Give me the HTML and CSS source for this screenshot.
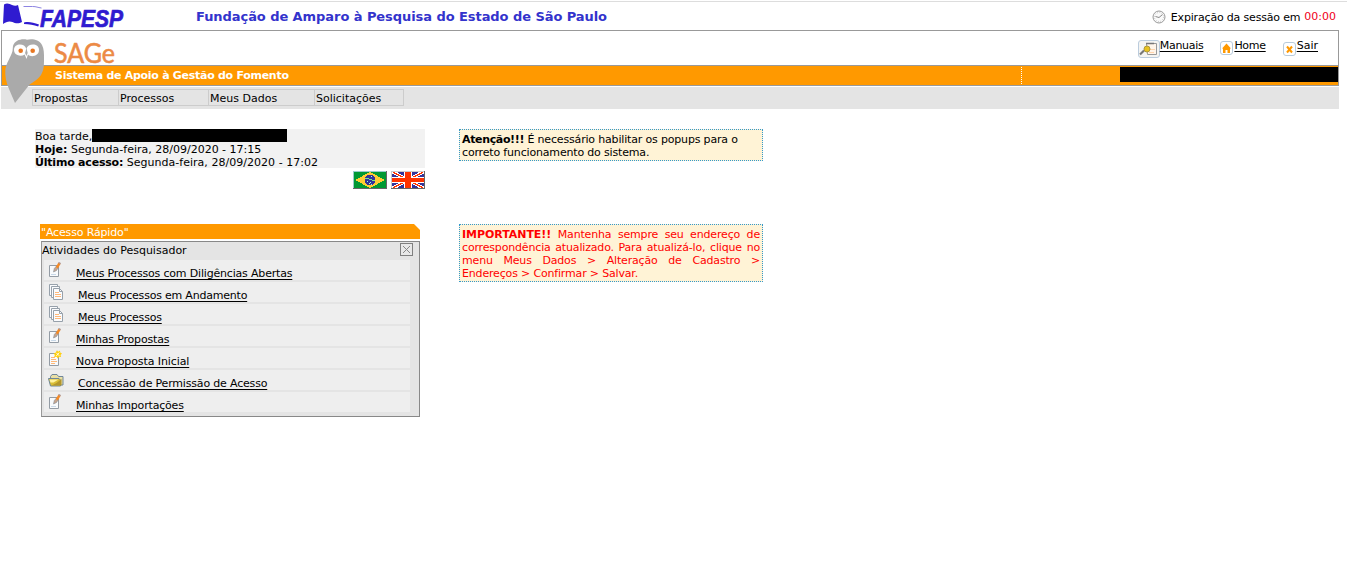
FILE: index.html
```html
<!DOCTYPE html>
<html lang="pt-BR">
<head>
<meta charset="utf-8">
<title>SAGe - FAPESP</title>
<link rel="stylesheet" href="styles.css">
</head>
<body>
<svg class="defs" width="0" height="0">
  <symbol id="edit" viewBox="0 0 17 17">
    <path d="M2.500 3.500h9v11h-9z" fill="#f8fafc" stroke="#949ca5"/>
    <path d="M4 12.500h5" stroke="#c8d8e8"/>
    <path d="M6.500 10l.8-3.500L9.500 4l2 1.200-2 3.300z" fill="#c9a58c" stroke="#858d96" stroke-width=".6"/>
    <path d="M8.800 5l2.500-4.200 2.200 1.300-2.600 4.300z" fill="#f58a25"/>
    <path d="M11.100 1l.8-.9 2 .9-.4 1.200z" fill="#a88c86"/>
  </symbol>
  <symbol id="pages" viewBox="0 0 17 17">
    <path d="M2.500 .5h8v11h-8z" fill="#fafbfd" stroke="#97a1ab"/>
    <path d="M4.500 2.500h8v11h-8z" fill="#fafbfd" stroke="#97a1ab"/>
    <path d="M6.500 4.500h6l3 3v8h-9z" fill="#fafbfd" stroke="#97a1ab"/>
    <path d="M8 8.500h4M8 10.500h6M8 12.500h6" stroke="#ffb878"/>
    <path d="M12.500 4.500v3h3" fill="none" stroke="#97a1ab"/>
  </symbol>
  <symbol id="new" viewBox="0 0 17 17">
    <path d="M2.500 3.500h9v12h-9z" fill="#f8fafc" stroke="#949ca5"/>
    <path d="M4 7.500h4M4 9.500h5M4 11.500h6M4 13.500h4" stroke="#ffb878"/>
    <path d="M10 .3l1.200 1.500L13 .5l.2 2 1.800 1-1.500 1.500.6 2-2-.3L10.800 8.500l-1.200-1.800-2.500.3.800-2L6.500 3.500l2-.7z" fill="#ffcf10"/>
    <path d="M9.300 2.800l3 3M12.300 2.500l-3 3.500" stroke="#fffbe0"/>
  </symbol>
  <symbol id="folder" viewBox="0 0 17 17">
    <path d="M3.500 4.500l1.500-2h5l1.500 2h4.500v8.500h-12z" fill="#e9dfa4" stroke="#71879a"/>
    <path d="M1.500 6.500h10.500l1.500 1.500v6H3.500z" fill="#d9bd35" stroke="#6f8798"/>
    <path d="M2.500 7.500h9l-5 3h-3z" fill="#fff3a0"/>
    <path d="M4.500 13.500l5-2.500 5-4v6.500z" fill="#b3962c"/>
  </symbol>
</svg>

<header class="top">
  <svg class="fapesp" width="124" height="28" viewBox="0 0 124 28">
    <path d="M4 2.500C7 .5 10 2 12 3c3 1.300 5 .5 6 0l4 17c-3 2-7 1.500-9.500 0C9 18.500 6 20 3 22z" fill="#2f1bd0"/>
    <path d="M23.500 4.500h9c4 0 5 1 9 1.500" fill="none" stroke="#8d84e2" stroke-width="1"/>
    <path d="M24 20.500c5-1 9 0 15 2l-.8 2C34 23 29 22 24 22z" fill="#2f1bd0"/>
    <text class="brand" x="40" y="24.500" textLength="83" lengthAdjust="spacingAndGlyphs">FAPESP</text>
  </svg>
  <h1 class="org">Fundação de Amparo à Pesquisa do Estado de São Paulo</h1>
  <div class="session">
    <svg class="clock" width="14" height="14" viewBox="0 0 14 14"><circle cx="7" cy="7" r="6" fill="#fafafa" stroke="#999"/><circle cx="7" cy="7" r="4.500" fill="none" stroke="#bbb" stroke-dasharray=".8 1.550"/><path d="M3.500 6.500l3.500 1 3.500-3" fill="none" stroke="#888"/></svg>
    <span class="sessionlabel">Expiração da sessão em</span>
    <span class="time">00:00</span>
  </div>
</header>

<div class="banner">
  <div class="brandrow">
    <svg class="sage" width="64" height="30" viewBox="0 0 64 30"><text x="0" y="24" textLength="61" lengthAdjust="spacingAndGlyphs">SAGe</text></svg>
    <nav class="links">
      <a class="manuais"><svg width="22" height="18" viewBox="0 0 22 18"><rect x=".5" y=".5" width="21" height="17" rx="2.500" fill="#f4f4f2" stroke="#bcd"/><path d="M8.500 3.500h10v11h-9z" fill="#fff5ea" stroke="#999"/><path d="M8 3.500h8" stroke="#777" stroke-width="1.500"/><path d="M12 9.500h5M11 12.500h5" stroke="#ffd3ac"/><path d="M2 14.500l4-4" stroke="#777" stroke-width="2.200"/><circle cx="9" cy="9" r="3" fill="#e8c21e" stroke="#ae983a"/></svg><span>Manuais</span></a>
      <a class="home"><svg width="13" height="14" viewBox="0 0 13 14"><rect x=".5" y=".5" width="12" height="13" rx="2.500" fill="#fff" stroke="#b8cbdc"/><path d="M6.500 2.500L11 7.500H10V12H7.500V9h-2v3H3V7.500H2z" fill="#f90"/></svg><span>Home</span></a>
      <a class="sair"><svg width="13" height="14" viewBox="0 0 13 14"><rect x=".5" y=".5" width="12" height="13" rx="2.500" fill="#fff" stroke="#b8cbdc"/><path d="M4 4.500l5 6M9 4.500l-5 6" stroke="#f90" stroke-width="2"/></svg><span>Sair</span></a>
    </nav>
  </div>
  <div class="system">
    <h2>Sistema de Apoio à Gestão do Fomento</h2>
    <span class="divider"></span>
    <span class="username"></span>
  </div>
  <svg class="owl" width="40" height="65" viewBox="0 0 40 65">
    <path d="M8 7C10 1 17-.5 22 .8 27-.5 34 .5 37 6c2 4 2 8 2 14 0 6 0 11-3 16-4 6-10 7.500-13 11.500L10 64 4 50C1 43 0 37 .3 31 1 24 6 18 7.500 12z" fill="#aaa"/>
    <path d="M9 11c0-7 11-7 12.300-1C23 4 34 4 34 11c0 6-8 8-11 4.500L21.500 20l-1.800-4.500C16 18 9 16.500 9 11z" fill="#fff"/>
    <path d="M21.400 9l1.300 5-1.300 3-1.300-3z" fill="#aaa"/>
    <circle cx="15.700" cy="11.800" r="2.300" fill="#e87722"/><circle cx="27.700" cy="11.800" r="2.300" fill="#e87722"/>
  </svg>
</div>

<div class="menubar">
  <nav class="menu">
    <a class="m1">Propostas</a><a class="m2">Processos</a><a class="m3">Meus Dados</a><a class="m4">Solicitações</a>
  </nav>
</div>

<main>
  <section class="left">
    <div class="greeting">
      <div class="hello"><span>Boa tarde,</span><i></i></div>
      <div class="today"><b>Hoje:</b> Segunda-feira, 28/09/2020 - 17:15</div>
      <div class="last"><b>Último acesso:</b> Segunda-feira, 28/09/2020 - 17:02</div>
    </div>
    <div class="flags">
      <svg width="34" height="18" viewBox="0 0 34 18" shape-rendering="crispEdges"><path fill="#093" d="M0 0h34v18H0z"/><path d="M17 1l15 8-15 8L2 9z" fill="#fc3"/><circle cx="17" cy="9" r="5.500" fill="#339"/><path d="M12 7.500h4M16 8.500h3M19 9.500h3" fill="none" stroke="#7de38a"/><path d="M14 10.500h1M17 11.500h1M18 13.500h1M16 12.500h1M18 5.500h1" stroke="#9fd"/><path d="M.5 17.500V.5h33" fill="none" stroke="#9cc"/><path d="M33.500 0v17.500H0" fill="none" stroke="#666"/></svg>
      <svg width="34" height="18" viewBox="0 0 34 18" shape-rendering="crispEdges"><path fill="#339" d="M0 0h34v18H0z"/><path d="M0 0l34 18M34 0L0 18" stroke="#fff" stroke-width="3.500"/><path d="M0 0l34 18M34 0L0 18" stroke="#f30" stroke-width="1.200"/><path d="M13 0h8v18h-8zM0 6h34v6H0z" fill="#fff"/><path d="M14 0h6v18h-6zM0 7h34v4H0z" fill="#f30"/><path d="M.5 17.500V.5h33" fill="none" stroke="#ccc"/><path d="M33.500 0v17.500H0" fill="none" stroke="#666"/></svg>
    </div>
    <div class="quick">
      <div class="tab"><span>"Acesso Rápido"</span></div>
      <div class="panel">
        <div class="paneltitle"><span>Atividades do Pesquisador</span>
          <svg width="13" height="13" viewBox="0 0 13 13"><rect x=".5" y=".5" width="12" height="12" fill="#e8e8e8" stroke="#808080"/><path d="M3 3l7 7M10 3l-7 7" stroke="#888"/></svg>
        </div>
        <ul>
          <li><svg><use href="#edit"/></svg><a>Meus Processos com Diligências Abertas</a></li>
          <li class="wide"><svg><use href="#pages"/></svg><a class="tight">Meus Processos em Andamento</a></li>
          <li class="wide"><svg><use href="#pages"/></svg><a class="tight">Meus Processos</a></li>
          <li><svg><use href="#edit"/></svg><a>Minhas Propostas</a></li>
          <li><svg><use href="#new"/></svg><a class="loose">Nova Proposta Inicial</a></li>
          <li class="wide"><svg><use href="#folder"/></svg><a>Concessão de Permissão de Acesso</a></li>
          <li><svg><use href="#edit"/></svg><a>Minhas Importações</a></li>
        </ul>
      </div>
    </div>
  </section>
  <section class="right">
    <div class="notice"><b>Atenção!!!</b> É necessário habilitar os popups para o<br>correto funcionamento do sistema.</div>
    <div class="notice important"><b>IMPORTANTE!!</b> Mantenha sempre seu endereço de correspondência atualizado. Para atualizá-lo, clique no menu Meus Dados &gt; Alteração de Cadastro &gt; Endereços &gt; Confirmar &gt; Salvar.</div>
  </section>
</main>
</body>
</html>
```
FILE: styles.css
```css
* { box-sizing: border-box; }
body { margin: 0; padding-top: 1px; height: 561px; overflow: hidden; background: #fff; color: #000; font: 11px/13px Verdana, "DejaVu Sans", sans-serif; }
h1, h2, ul { margin: 0; padding: 0; }
svg { display: block; flex: none; overflow: visible; }
.defs { position: absolute; }

.top { display: flex; height: 29px; border-top: 1px solid #ddd; }
.brand { font: italic bold 24px "Liberation Sans", sans-serif; fill: #2f1bd0; stroke: #2f1bd0; stroke-width: .7; }
.org { margin: 6px 0 0 72px; font-size: 13px; line-height: 17px; letter-spacing: -.065px; color: #33c; white-space: nowrap; }
.session { display: flex; margin: 8px 11px 0 auto; white-space: nowrap; }
.clock { margin-right: 5px; }
.sessionlabel { margin-right: 4px; padding-top: 1px; letter-spacing: -.18px; }
.time { color: #f00020; }

.banner { position: relative; width: 1338px; height: 56px; margin-left: 1px; border: 1px solid #999; }
.brandrow { display: flex; height: 35px; border-bottom: 1px solid #999; }
.sage { margin: 8px 0 0 52px; }
.sage text { font: 27px Lato, sans-serif; fill: #ec8a45; stroke: #ec8a45; stroke-width: .6; }
.links { display: flex; margin: 8px 20px 0 auto; }
.links a { display: flex; text-decoration: underline; text-underline-offset: 2px; }
.manuais svg { margin-top: 1px; }
.manuais span, .home span { letter-spacing: -.3px; }
.home { margin-left: 17px; }
.home svg { margin: 2px 1px 0 0; }
.sair { margin-left: 17px; }
.sair svg { margin: 3px 1px 0 0; }
.system { display: flex; height: 19px; background: #f90; }
.system h2 { padding-left: 53px; font-size: 11px; line-height: 20px; letter-spacing: -.28px; color: #fff; white-space: nowrap; width: 1019px; }
.divider { height: 17px; margin-top: 1px; border-left: 1px dotted #fff; }
.username { width: 218px; height: 15px; margin: 1px 0 0 auto; background: #000; }
.owl { position: absolute; left: 3px; top: 8px; }

.menubar { width: 1338px; height: 22px; margin: 1px 0 0 1px; padding: 2px 0 0 31px; background: #e4e4e4; }
.menu { display: flex; width: 372px; height: 17px; border: 1px solid #ccc; line-height: 17px; }
.menu a { padding-left: 1px; border-left: 1px solid #ccc; white-space: nowrap; }
.menu .m1 { width: 85px; border-left: 0; }
.menu .m2 { width: 90px; }
.menu .m3 { width: 106px; }

main { display: flex; padding: 20px 0 0 35px; }
.left { width: 390px; }
.greeting { height: 39px; background: #f2f2f2; line-height: 15px; white-space: nowrap; }
.greeting div { height: 13px; }
.hello { display: flex; }
.hello span { width: 57px; }
.hello i { width: 195px; height: 13px; background: #000; }
.last { letter-spacing: .03px; }
.last b { letter-spacing: -.21px; }
.flags { display: flex; gap: 4px; justify-content: flex-end; padding-top: 3px; }
.quick { width: 380px; margin: 35px 0 0 5px; }
.tab { height: 15px; padding: 2px 0 0 1px; background: #f90; color: #fff; letter-spacing: -.15px; clip-path: polygon(0 0, 374px 0, 100% 6px, 100% 100%, 0 100%); }
.panel { height: 176px; margin: 2px 0 0 1px; padding-left: 2px; border: 1px solid #888; border-left-color: #999; background: #e4e4e4; }
.paneltitle { display: flex; justify-content: space-between; height: 18px; margin-left: -2px; padding: 1px 6px 0 0; }
.paneltitle span { padding-top: 1px; }
ul { width: 366px; list-style: none; }
li { display: flex; height: 20px; margin-bottom: 2px; padding: 2px 0 0 3px; background: #eee; white-space: nowrap; }
li svg { width: 17px; height: 17px; }
li a { margin: 5px 0 0 12px; letter-spacing: -.18px; text-decoration: underline; text-underline-offset: 2px; }
.wide a { margin-left: 14px; }
li .tight { letter-spacing: -.21px; }
li .loose { letter-spacing: -.1px; }

.right { width: 304px; margin-left: 34px; }
.notice { height: 32px; padding: 3px 2px 2px; border: 1px dotted #39c; background: #fff3d6; letter-spacing: -.17px; white-space: nowrap; }
.notice b { letter-spacing: -.35px; }
.important { height: 58px; margin-top: 63px; color: #f00; white-space: normal; text-align: justify; }
.important b { letter-spacing: -.05px; }
```
